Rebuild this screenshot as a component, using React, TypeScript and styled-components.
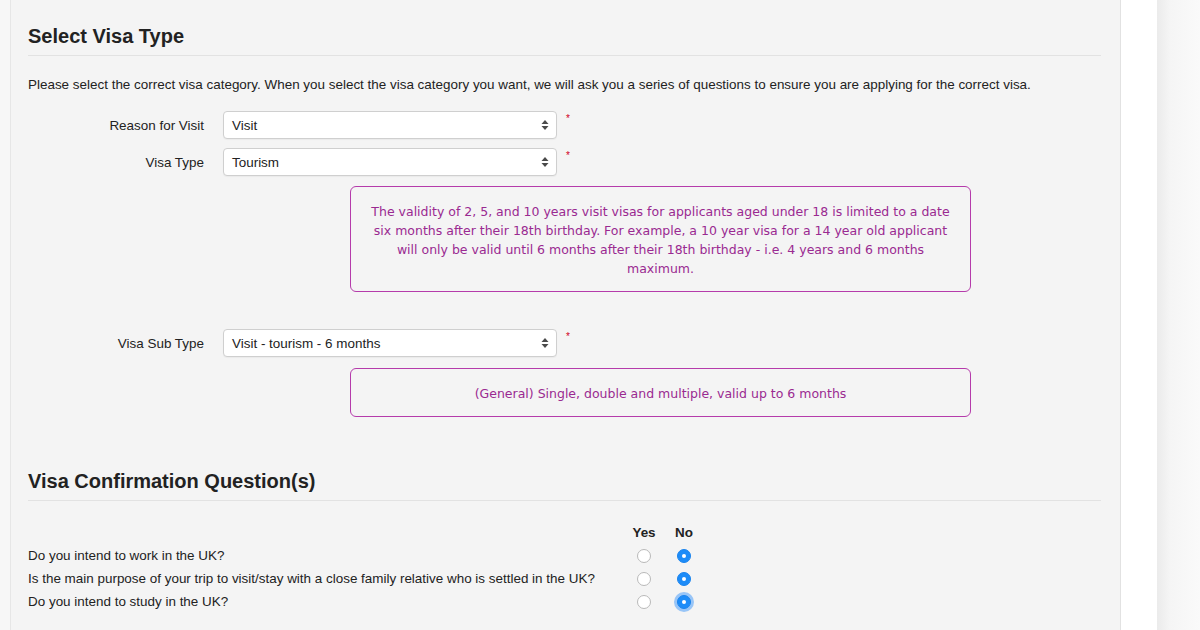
import { Fragment } from "react";
import styled, { createGlobalStyle } from "styled-components";

const GlobalStyle = createGlobalStyle`
  html, body {
    margin: 0;
    padding: 0;
    background: #f7f7f7;
  }
  body {
    font-family: "Liberation Sans", Arial, Helvetica, sans-serif;
    color: #333;
  }
`;

const Page = styled.div`
  display: flex;
  width: 1200px;
  height: 630px;
  overflow: hidden;
  background: #f7f7f7;
`;

const Gutter = styled.div`
  width: 10px;
  flex: none;
`;

const Panel = styled.main`
  width: 1111px;
  flex: none;
  background: #f4f4f4;
  border-left: 1px solid #e6e6e6;
  border-right: 1px solid #e2e2e2;
  padding: 24px 19px 0 17px;
  box-sizing: border-box;
`;

const SideColumn = styled.div`
  width: 36px;
  flex: none;
  background: #ffffff;
`;

const Shade = styled.div`
  flex: 1;
  background: linear-gradient(to right, #ebebeb 0%, #f5f5f5 30%, #fafafa 100%);
`;

const Heading = styled.h2<{ $top?: number }>`
  margin: ${(p) => p.$top ?? 0}px 0 0;
  font-size: 20px;
  line-height: 24px;
  font-weight: 700;
  color: #222;
`;

const Rule = styled.hr`
  margin: 7px 0 0;
  border: 0;
  border-top: 1px solid #e2e2e2;
  height: 0;
`;

const Intro = styled.p`
  margin: 20px 0 0;
  font-size: 13.45px;
  line-height: 18px;
  color: #222;
`;

const Form = styled.div`
  display: flex;
  flex-direction: column;
  margin-top: 17px;
`;

const Row = styled.div<{ $gap: number }>`
  display: grid;
  grid-template-columns: 176px 334px 20px;
  column-gap: 19px;
  align-items: center;
  margin-top: ${(p) => p.$gap}px;
`;

const Label = styled.label`
  text-align: right;
  font-size: 13.45px;
  color: #222;
`;

const SelectBox = styled.div`
  height: 28px;
  box-sizing: border-box;
  display: flex;
  align-items: center;
  justify-content: space-between;
  padding: 0 7px 0 8px;
  background: #fff;
  border: 1px solid #cfcfcf;
  border-radius: 4px;
  box-shadow: 0 1px 1px rgba(0, 0, 0, 0.04);
  font-size: 13.45px;
  color: #222;
`;

const Required = styled.span`
  align-self: start;
  margin: 3px 0 0 -10px;
  color: #d0021b;
  font-size: 10px;
  line-height: 10px;
`;

const InfoBox = styled.div<{ $gap: number }>`
  margin: ${(p) => p.$gap}px 0 0 322px;
  width: 621px;
  box-sizing: border-box;
  padding: 15px 18px 13px;
  border: 1px solid #b53bab;
  border-radius: 6px;
  text-align: center;
  font-family: "DejaVu Sans", Verdana, sans-serif;
  font-size: 12.5px;
  line-height: 19px;
  color: #9a2a91;
`;

const QuestionGrid = styled.div`
  display: grid;
  grid-template-columns: 596px 40px 40px;
  margin-top: 22px;
  font-size: 13.45px;
  color: #222;
`;

const ColHead = styled.div`
  font-weight: 700;
  text-align: center;
  line-height: 20px;
  margin-bottom: 1px;
`;

const Question = styled.div`
  line-height: 23px;
`;

const RadioCell = styled.div`
  display: flex;
  align-items: center;
  justify-content: center;
  height: 23px;
`;

const Radio = styled.span<{ $checked?: boolean; $focus?: boolean }>`
  width: 14px;
  height: 14px;
  box-sizing: border-box;
  border-radius: 50%;
  display: flex;
  align-items: center;
  justify-content: center;
  background: ${(p) => (p.$checked ? "#1d8cf8" : "#fff")};
  border: 1px solid ${(p) => (p.$checked ? "#1a84ee" : "#b9b9b9")};
  box-shadow: ${(p) => (p.$focus ? "0 0 0 3px rgba(60, 150, 250, 0.5)" : "none")};

  &::after {
    content: "";
    display: ${(p) => (p.$checked ? "block" : "none")};
    width: 4px;
    height: 4px;
    border-radius: 50%;
    background: #fff;
  }
`;

function Arrows() {
  return (
    <svg width="8" height="12" viewBox="0 0 8 12">
      <path d="M4 1 L7.5 5 H0.5 Z" fill="#4a4a4a" />
      <path d="M4 11 L7.5 7 H0.5 Z" fill="#4a4a4a" />
    </svg>
  );
}

function Field({ label, value, gap }: { label: string; value: string; gap: number }) {
  return (
    <Row $gap={gap}>
      <Label>{label}</Label>
      <SelectBox>
        <span>{value}</span>
        <Arrows />
      </SelectBox>
      <Required>*</Required>
    </Row>
  );
}

const questions = [
  { text: "Do you intend to work in the UK?", focus: false },
  {
    text: "Is the main purpose of your trip to visit/stay with a close family relative who is settled in the UK?",
    focus: false,
  },
  { text: "Do you intend to study in the UK?", focus: true },
];

export default function App() {
  return (
    <>
      <GlobalStyle />
      <Page>
        <Gutter />
        <Panel>
          <Heading>Select Visa Type</Heading>
          <Rule />
          <Intro>
            Please select the correct visa category. When you select the visa category you want, we
            will ask you a series of questions to ensure you are applying for the correct visa.
          </Intro>
          <Form>
            <Field label="Reason for Visit" value="Visit" gap={0} />
            <Field label="Visa Type" value="Tourism" gap={9} />
            <InfoBox $gap={10}>
              The validity of 2, 5, and 10 years visit visas for applicants aged under 18 is limited
              to a date six months after their 18th birthday. For example, a 10 year visa for a 14
              year old applicant will only be valid until 6 months after their 18th birthday - i.e. 4
              years and 6 months maximum.
            </InfoBox>
            <Field label="Visa Sub Type" value="Visit - tourism - 6 months" gap={37} />
            <InfoBox $gap={11}>(General) Single, double and multiple, valid up to 6 months</InfoBox>
          </Form>

          <Heading $top={52}>Visa Confirmation Question(s)</Heading>
          <Rule />
          <QuestionGrid>
            <div />
            <ColHead>Yes</ColHead>
            <ColHead>No</ColHead>
            {questions.map((q) => (
              <Fragment key={q.text}>
                <Question>{q.text}</Question>
                <RadioCell>
                  <Radio />
                </RadioCell>
                <RadioCell>
                  <Radio $checked $focus={q.focus} />
                </RadioCell>
              </Fragment>
            ))}
          </QuestionGrid>
        </Panel>
        <SideColumn />
        <Shade />
      </Page>
    </>
  );
}
